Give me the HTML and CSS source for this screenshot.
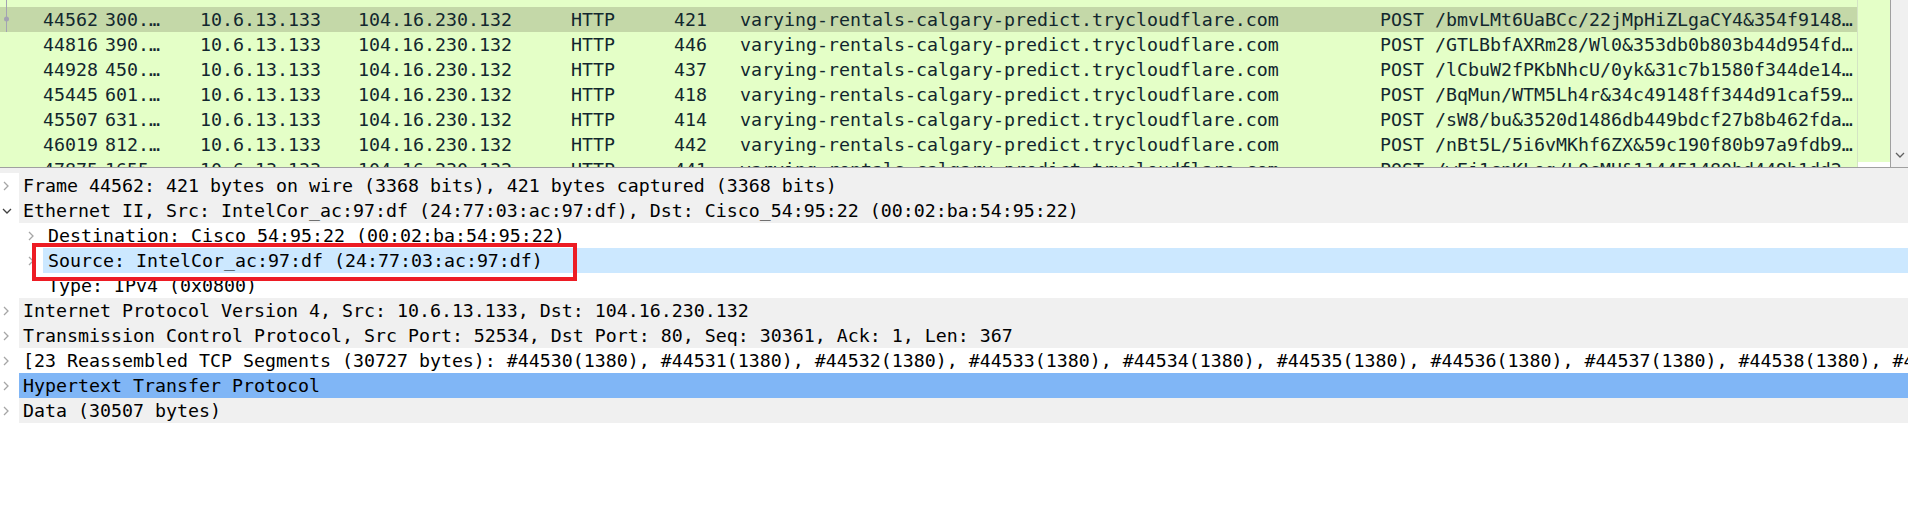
FILE: index.html
```html
<!DOCTYPE html>
<html>
<head>
<meta charset="utf-8">
<link rel="stylesheet" href="styles.css">
</head>
<body>
<div class="plist">
  <svg class="related" width="12" height="33" viewBox="0 0 12 33"><line x1="6.5" y1="0" x2="6.5" y2="32" stroke="#a3a3b3" stroke-width="1"/><circle cx="6.5" cy="19" r="2.5" fill="#a3a3b3"/></svg>
  <div class="rows">
    <div class="prow partial"><span class="c-no"></span><span class="c-time"></span><span class="c-src">104.16.230.132</span><span class="c-dst"></span><span class="c-proto">HTTP</span><span class="c-len">541</span><span class="c-host"></span><span class="c-info"></span></div>
    <div class="prow sel"><span class="c-no">44562</span><span class="c-time">300.…</span><span class="c-src">10.6.13.133</span><span class="c-dst">104.16.230.132</span><span class="c-proto">HTTP</span><span class="c-len">421</span><span class="c-host">varying-rentals-calgary-predict.trycloudflare.com</span><span class="c-info">POST /bmvLMt6UaBCc/22jMpHiZLgaCY4&amp;354f9148…</span></div>
    <div class="prow"><span class="c-no">44816</span><span class="c-time">390.…</span><span class="c-src">10.6.13.133</span><span class="c-dst">104.16.230.132</span><span class="c-proto">HTTP</span><span class="c-len">446</span><span class="c-host">varying-rentals-calgary-predict.trycloudflare.com</span><span class="c-info">POST /GTLBbfAXRm28/Wl0&amp;353db0b803b44d954fd…</span></div>
    <div class="prow"><span class="c-no">44928</span><span class="c-time">450.…</span><span class="c-src">10.6.13.133</span><span class="c-dst">104.16.230.132</span><span class="c-proto">HTTP</span><span class="c-len">437</span><span class="c-host">varying-rentals-calgary-predict.trycloudflare.com</span><span class="c-info">POST /lCbuW2fPKbNhcU/0yk&amp;31c7b1580f344de14…</span></div>
    <div class="prow"><span class="c-no">45445</span><span class="c-time">601.…</span><span class="c-src">10.6.13.133</span><span class="c-dst">104.16.230.132</span><span class="c-proto">HTTP</span><span class="c-len">418</span><span class="c-host">varying-rentals-calgary-predict.trycloudflare.com</span><span class="c-info">POST /BqMun/WTM5Lh4r&amp;34c49148ff344d91caf59…</span></div>
    <div class="prow"><span class="c-no">45507</span><span class="c-time">631.…</span><span class="c-src">10.6.13.133</span><span class="c-dst">104.16.230.132</span><span class="c-proto">HTTP</span><span class="c-len">414</span><span class="c-host">varying-rentals-calgary-predict.trycloudflare.com</span><span class="c-info">POST /sW8/bu&amp;3520d1486db449bdcf27b8b462fda…</span></div>
    <div class="prow"><span class="c-no">46019</span><span class="c-time">812.…</span><span class="c-src">10.6.13.133</span><span class="c-dst">104.16.230.132</span><span class="c-proto">HTTP</span><span class="c-len">442</span><span class="c-host">varying-rentals-calgary-predict.trycloudflare.com</span><span class="c-info">POST /nBt5L/5i6vMKhf6ZX&amp;59c190f80b97a9fdb9…</span></div>
    <div class="prow"><span class="c-no">47875</span><span class="c-time">1655…</span><span class="c-src">10.6.13.133</span><span class="c-dst">104.16.230.132</span><span class="c-proto">HTTP</span><span class="c-len">441</span><span class="c-host">varying-rentals-calgary-predict.trycloudflare.com</span><span class="c-info">POST /wEj1cnKLog/L0cMU&amp;114451480bd449b1dd2…</span></div>
  </div>
  <div class="minimap"><div class="mm-fill"></div><div class="mm-white"></div></div>
  <div class="vscroll"><svg width="10" height="6" viewBox="0 0 10 6"><path d="M1 1 L5 5 L9 1" fill="none" stroke="#606060" stroke-width="1.3"/></svg></div>
</div>
<div class="splitter"></div>
<div class="tree">
  <div class="trow"><div class="gut d0"><svg class="chev" width="6" height="10" viewBox="0 0 6 10"><path d="M1 1 L5 5 L1 9" fill="none" stroke="#a6a6a6" stroke-width="1.3"/></svg></div><div class="lbl gray">Frame 44562: 421 bytes on wire (3368 bits), 421 bytes captured (3368 bits)</div></div>
  <div class="trow"><div class="gut d0 open"><svg class="chev" width="10" height="6" viewBox="0 0 10 6"><path d="M1 1 L5 5 L9 1" fill="none" stroke="#404040" stroke-width="1.3"/></svg></div><div class="lbl gray">Ethernet II, Src: IntelCor_ac:97:df (24:77:03:ac:97:df), Dst: Cisco_54:95:22 (00:02:ba:54:95:22)</div></div>
  <div class="trow"><div class="gut d1"><svg class="chev" width="6" height="10" viewBox="0 0 6 10"><path d="M1 1 L5 5 L1 9" fill="none" stroke="#a6a6a6" stroke-width="1.3"/></svg></div><div class="lbl l1">Destination: Cisco_54:95:22 (00:02:ba:54:95:22)</div></div>
  <div class="trow"><div class="gut d1"><svg class="chev" width="6" height="10" viewBox="0 0 6 10"><path d="M1 1 L5 5 L1 9" fill="none" stroke="#a6a6a6" stroke-width="1.3"/></svg></div><div class="lbl l1 hover">Source: IntelCor_ac:97:df (24:77:03:ac:97:df)</div></div>
  <div class="trow"><div class="gut d1"></div><div class="lbl l1">Type: IPv4 (0x0800)</div></div>
  <div class="trow"><div class="gut d0"><svg class="chev" width="6" height="10" viewBox="0 0 6 10"><path d="M1 1 L5 5 L1 9" fill="none" stroke="#a6a6a6" stroke-width="1.3"/></svg></div><div class="lbl gray">Internet Protocol Version 4, Src: 10.6.13.133, Dst: 104.16.230.132</div></div>
  <div class="trow"><div class="gut d0"><svg class="chev" width="6" height="10" viewBox="0 0 6 10"><path d="M1 1 L5 5 L1 9" fill="none" stroke="#a6a6a6" stroke-width="1.3"/></svg></div><div class="lbl gray">Transmission Control Protocol, Src Port: 52534, Dst Port: 80, Seq: 30361, Ack: 1, Len: 367</div></div>
  <div class="trow"><div class="gut d0"><svg class="chev" width="6" height="10" viewBox="0 0 6 10"><path d="M1 1 L5 5 L1 9" fill="none" stroke="#a6a6a6" stroke-width="1.3"/></svg></div><div class="lbl">[23 Reassembled TCP Segments (30727 bytes): #44530(1380), #44531(1380), #44532(1380), #44533(1380), #44534(1380), #44535(1380), #44536(1380), #44537(1380), #44538(1380), #44539(1380), #44540(1380)]</div></div>
  <div class="trow"><div class="gut d0"><svg class="chev" width="6" height="10" viewBox="0 0 6 10"><path d="M1 1 L5 5 L1 9" fill="none" stroke="#a6a6a6" stroke-width="1.3"/></svg></div><div class="lbl selected">Hypertext Transfer Protocol</div></div>
  <div class="trow"><div class="gut d0"><svg class="chev" width="6" height="10" viewBox="0 0 6 10"><path d="M1 1 L5 5 L1 9" fill="none" stroke="#a6a6a6" stroke-width="1.3"/></svg></div><div class="lbl gray">Data (30507 bytes)</div></div>
  <div class="annot"></div>
</div>
</body>
</html>
```
FILE: styles.css
```css
* { box-sizing: border-box; }
html, body { margin: 0; padding: 0; }
body {
  width: 1908px;
  height: 517px;
  overflow: hidden;
  background: #ffffff;
  font-family: "DejaVu Sans Mono", "Liberation Mono", monospace;
  font-size: 18.27px;
}
.plist {
  position: relative;
  display: flex;
  height: 168px;
  overflow: hidden;
  background: #e4ffc7;
  border-bottom: 1px solid #a0a0a0;
}
.related { position: absolute; left: 0; top: 0; z-index: 2; }
.rows {
  flex: 0 0 1857px;
  margin-top: -18px;
}
.prow {
  display: grid;
  grid-template-columns: 101px 64px 191px 211px 103px 66px 640px 481px;
  height: 25px;
  line-height: 25px;
  color: #12272e;
  white-space: pre;
}
.prow.partial { line-height: 23px; }
.prow > span { overflow: hidden; }
.prow.sel { background: #c4d8a8; }
.c-no { text-align: right; padding-right: 3px; }
.c-time { padding-left: 4px; }
.c-src { text-align: center; }
.c-dst { padding-left: 2px; }
.c-proto, .c-len, .c-host, .c-info { padding-left: 4px; }
.minimap {
  flex: 0 0 33px;
  display: flex;
  flex-direction: column;
  border-left: 1px solid #d4e4c4;
}
.mm-fill { flex: 1; background: #e4ffc7; }
.mm-white { height: 5px; background: #ffffff; }
.vscroll {
  flex: 0 0 18px;
  background: #f0f0f0;
  border-left: 1px solid #a0a0a0;
  display: flex;
  flex-direction: column;
  justify-content: flex-end;
  align-items: center;
  padding-bottom: 9px;
}
.splitter { height: 5px; background: #f0f0f0; }
.tree { position: relative; padding-top: 0; }
.trow { display: flex; height: 25px; }
.gut { display: flex; align-items: center; flex: 0 0 auto; }
.gut.d0 { width: 19px; padding-left: 3px; }
.gut.d0.open { padding-left: 2px; }
.gut.d1 { width: 43px; padding-left: 28px; }
.lbl {
  flex: 1;
  height: 25px;
  line-height: 25px;
  padding-left: 4px;
  white-space: pre;
  overflow: hidden;
  color: #000000;
}
.lbl.l1 { padding-left: 5px; }
.gray { background: #f0f0f0; }
.hover { background: #cce8ff; }
.selected { background: #80b6f6; }
.annot {
  position: absolute;
  left: 32px;
  top: 70px;
  width: 545px;
  height: 38px;
  border: 4px solid #ed1c24;
}
```
